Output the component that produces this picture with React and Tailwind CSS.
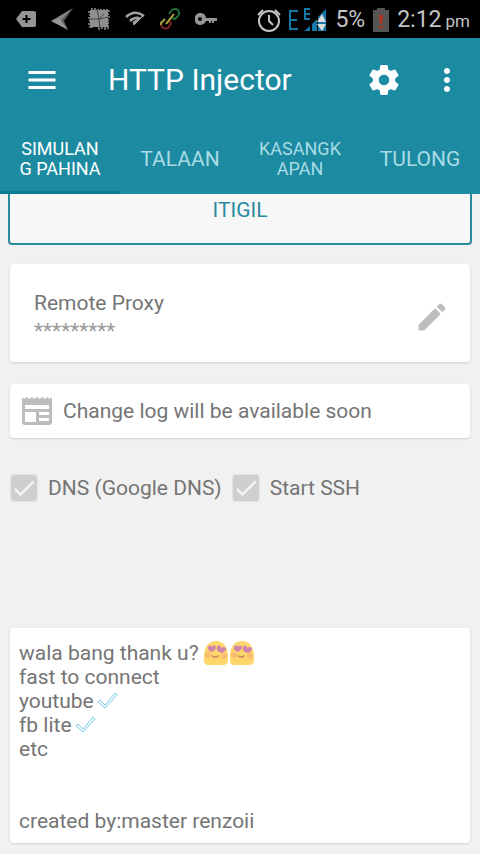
import React, { useState } from "react";
import { MdCheck, MdEdit, MdMenu, MdMoreVert } from "react-icons/md";

const tabs = [
  { id: "home", lines: ["SIMULAN", "G PAHINA"] },
  { id: "log", lines: ["TALAAN"] },
  { id: "tools", lines: ["KASANGK", "APAN"] },
  { id: "help", lines: ["TULONG"] },
];

const TagIcon = () => (
  <svg width="20" height="18" viewBox="0 0 20 18">
    <path d="M6 1h12a2 2 0 0 1 2 2v12a2 2 0 0 1-2 2H6L0 9z" fill="#959595" />
    <path d="M10.500 5v8M6.500 9h8" stroke="#000" strokeWidth="2" />
  </svg>
);

const ArrowIcon = () => (
  <svg width="22" height="22" viewBox="0 0 22 22">
    <path d="M22 0 0 13l9 1z" fill="#858585" />
    <path d="M22 0 9 14l8 8-4-9z" fill="#5c5c5c" />
    <path d="m0 13 9-2 8 11z" fill="#9a9a9a" />
  </svg>
);

const PatchIcon = () => (
  <svg width="22" height="22" viewBox="0 0 22 22">
    <path d="M2 2h18v17H2z" fill="#8f8f8f" />
    <path
      d="M4 0v4M7 0v4M10 1v3M13 1v3M16 1v3M19 1v3M0 4h4M1 7h3M0 10h4M18 3h4M18 6h3M18 9h4M1 13h4M0 16h4M1 19h4M11 18v4M14 18v3M17 18v4M20 17v4M19 12h2M19 15h2"
      stroke="#8f8f8f"
      strokeWidth="1.500"
    />
    <path d="m9 1 2 10 1 10M1 11l10 0 10-2M11 11l5-5" stroke="#444" fill="none" />
  </svg>
);

const WifiIcon = () => (
  <svg width="20" height="18" viewBox="0 0 20 18" fill="none">
    <path d="M1 7Q10-1 19 6" stroke="#a3a3a3" strokeWidth="2.500" />
    <path d="M5 11q4-4 9-3" stroke="#a3a3a3" strokeWidth="2.500" />
    <path d="M18 6 9 15l-1-3z" fill="#a3a3a3" stroke="#a3a3a3" />
  </svg>
);

const LinkIcon = () => (
  <svg width="20" height="22" viewBox="0 0 20 22" fill="none" strokeWidth="2">
    <path d="m9 6 3-4q3-2 6 0 2 3 0 6l-3 3-3-1" stroke="#226b38" />
    <path d="m5 11-4 4v2" stroke="#a5a13c" />
    <path d="M1 17q2 5 7 3l3-4-2-3" stroke="#7c2227" />
    <path d="m6 16 8-10" stroke="#b9a83c" />
  </svg>
);

const KeyIcon = () => (
  <svg width="22" height="12" viewBox="0 0 22 12">
    <path
      fillRule="evenodd"
      d="M6 0a6 6 0 1 0 5 8h3v2h2V8h1v2h2V8h3V5H11A6 6 0 0 0 6 0zM5 4a2 2 0 1 1 0 4 2 2 0 0 1 0-4z"
      fill="#959595"
    />
  </svg>
);

const AlarmIcon = () => (
  <svg width="24" height="24" viewBox="0 0 24 24" fill="none" stroke="#c4c4c4">
    <circle cx="12" cy="13" r="10" strokeWidth="2" />
    <path d="M12 7v6l4 4M1 7l5-5M23 7l-5-5" strokeWidth="2" />
  </svg>
);

const SignalIcon = () => (
  <svg width="38" height="24" viewBox="0 0 38 24">
    <path
      d="M9 3H1v18h8M1 12h7M21 1h-5v10h5M16 6h5"
      stroke="#1478a8"
      strokeWidth="2"
      fill="none"
    />
    <path d="M15 23l6-5v5zM23 23v-7l5-5v12zM29 23V9l8-8v22z" fill="#1478a8" />
    <path d="M28 14h9l-4-8zM28 16h9l-4 7z" fill="#dcdcdc" />
  </svg>
);

const BatteryIcon = () => (
  <svg width="16" height="24" viewBox="0 0 16 24">
    <path d="M4 0h8v2h4v22H0V2h4z" fill="#555" />
    <path d="M6 7h4l-1 9H7zM6 18h4v2H6z" fill="#b5341d" />
  </svg>
);

const GearIcon = () => (
  <svg width="36" height="36" viewBox="0 0 24 24" fill="currentColor">
    <path d="M19.43 12.980c.04-.32.07-.64.07-.98s-.03-.66-.07-.98l2.110-1.650c.19-.15.24-.42.12-.64l-2-3.460c-.12-.22-.39-.3-.61-.22l-2.490 1c-.52-.4-1.080-.73-1.690-.98l-.38-2.650C14.460 2.180 14.250 2 14 2h-4c-.25 0-.46.18-.49.42l-.38 2.650c-.61.25-1.170.59-1.690.98l-2.490-1c-.23-.09-.49 0-.61.22l-2 3.460c-.13.22-.07.49.12.64l2.110 1.650c-.04.32-.07.65-.07.98s.03.66.07.98l-2.110 1.650c-.19.15-.24.42-.12.64l2 3.460c.12.22.39.3.61.22l2.490-1c.52.4 1.080.73 1.690.98l.38 2.650c.03.24.24.42.49.42h4c.25 0 .46-.18.49-.42l.38-2.650c.61-.25 1.170-.59 1.690-.98l2.490 1c.23.09.49 0 .61-.22l2-3.460c.12-.22.07-.49-.12-.64l-2.110-1.650zM12 15.500c-1.930 0-3.500-1.570-3.500-3.500s1.570-3.500 3.500-3.500 3.500 1.570 3.500 3.500-1.570 3.500-3.500 3.500z" />
  </svg>
);

const NewsIcon = () => (
  <svg width="30" height="28" viewBox="0 0 30 28" fill="#bdbdbd">
    <path
      fillRule="evenodd"
      d="M0 0l2 2 3-2 2 2 3-2 2 2 3-2 3 2 2-2 3 2 2-2 3 2 2-2v25a3 3 0 0 1-3 3H3a3 3 0 0 1-3-3zM3 8v4h24V8zM3 15v10h11V15zM17 15v3h10v-3zM17 21v3h10v-3z"
    />
  </svg>
);

const HeartEyes = () => (
  <svg
    width="26"
    height="24"
    viewBox="0 0 26 24"
    className="inline-block align-top"
    role="img"
    aria-label="heart eyes"
  >
    <path
      d="M1 19C0 7 5 0 13 0s13 7 12 19c0 3-1 4-4 5H4c-2-1-3-2-3-5z"
      fill="#fdd76c"
    />
    <circle cx="5" cy="14" r="3" fill="#f9bd70" />
    <circle cx="21" cy="15" r="3" fill="#f9bd70" />
    <path d="M9 11C6 10 4 8 5 6c1-2 3-2 4 0 1-2 3-2 4 0 0 2-2 4-4 5z" fill="#cf84ac" />
    <path d="M19 12c-4-1-6-3-5-6 1-2 4-2 4 1 2-2 5-1 5 1 0 2-2 3-4 4z" fill="#cf84ac" />
    <path d="M8 14q4 2 8 0c0 4-7 4-8 0z" fill="#d28a65" />
  </svg>
);

const OutlinedCheck = () => (
  <svg
    width="24"
    height="24"
    viewBox="0 0 24 24"
    className="inline-block align-top"
    role="img"
    aria-label="check"
  >
    <path
      d="m2 13 2-2 5 5L19 4l2 2L9 19z"
      fill="#effaff"
      stroke="#83cbe8"
      strokeLinejoin="round"
    />
  </svg>
);

const StatusBar = () => (
  <div className="flex h-[38px] items-center justify-between bg-black pl-4 pr-[10px] text-[#c4c4c4]">
    <div className="flex items-center gap-[15px]">
      <TagIcon />
      <ArrowIcon />
      <PatchIcon />
      <WifiIcon />
      <LinkIcon />
      <KeyIcon />
    </div>
    <div className="flex items-center gap-2 pt-[2px] text-[23px] leading-6">
      <AlarmIcon />
      <SignalIcon />
      <span>5%</span>
      <BatteryIcon />
      <span className="flex items-baseline gap-1">
        2:12<span className="text-[17px] leading-none">pm</span>
      </span>
    </div>
  </div>
);

const CheckOption = ({ label }) => (
  <label className="flex items-center gap-[10px]">
    <span className="relative size-7">
      <input
        type="checkbox"
        defaultChecked
        disabled
        className="block size-7 appearance-none rounded border border-[#e4e4e4] bg-[#cfcfcf]"
      />
      <MdCheck className="pointer-events-none absolute inset-0 size-7 stroke-[#f4f4f4] text-[#f4f4f4]" />
    </span>
    {label}
  </label>
);

const App = () => {
  const [active, setActive] = useState("home");

  return (
    <div className="min-h-screen overflow-hidden bg-[#f1f1f1] font-['Roboto','Liberation_Sans',sans-serif] text-[21px] leading-6 text-[#757575]">
      <header className="relative z-10">
        <StatusBar />
        <div className="bg-[#1c8ba1] text-white">
          <div className="flex h-[84px] items-center pl-6 pr-[15px]">
            <button aria-label="Menu">
              <MdMenu size={36} />
            </button>
            <h1 className="ml-12 flex-1 text-[30px] leading-9">HTTP Injector</h1>
            <button aria-label="Settings">
              <GearIcon />
            </button>
            <button aria-label="More options" className="ml-[27px]">
              <MdMoreVert size={36} />
            </button>
          </div>
          <nav className="grid h-[72px] grid-cols-4">
            {tabs.map((tab) => (
              <button
                key={tab.id}
                onClick={() => setActive(tab.id)}
                className={`border-b-[3px] pt-1 ${
                  active === tab.id
                    ? "border-[#0a7a92] text-white"
                    : "border-transparent text-[#a9dbe5]"
                } ${tab.lines.length > 1 ? "text-[18px] leading-5" : "text-[21px] leading-6"}`}
              >
                {tab.lines.map((line) => (
                  <span key={line} className="block">
                    {line}
                  </span>
                ))}
              </button>
            ))}
          </nav>
        </div>
      </header>

      {/* page is scrolled a little, so the button slides under the tabs */}
      <main className="-mt-5 px-[10px] pb-[11px]">
        <div className="-mx-[2px]">
          <button className="h-[71px] w-full rounded border-2 border-[#2a8a9f] bg-[#f7f7f7] text-[#2a8a9f]">
            ITIGIL
          </button>
        </div>

        <section className="mt-[19px] flex h-[98px] items-center justify-between rounded bg-white pl-6 pr-5 pt-2 shadow">
          <div>
            <h2 className="leading-7">Remote Proxy</h2>
            <p className="leading-7 text-[#9a9a9a]">*********</p>
          </div>
          <button aria-label="Edit proxy" className="text-[#bdbdbd]">
            <MdEdit size={36} />
          </button>
        </section>

        <section className="mt-[22px] flex h-[54px] items-center gap-[11px] rounded bg-white pl-3 shadow">
          <NewsIcon />
          <p>Change log will be available soon</p>
        </section>

        <div className="mt-9 flex items-center gap-[10px]">
          <CheckOption label="DNS (Google DNS)" />
          <CheckOption label="Start SSH" />
        </div>

        <section className="mt-[126px] rounded bg-white px-[9px] pb-[10px] pt-[13px] shadow">
          <p className="flex">
            <span>wala bang thank u?</span>
            <span className="ml-1 flex">
              <HeartEyes />
              <HeartEyes />
            </span>
          </p>
          <p>fast to connect</p>
          <p className="flex gap-[2px]">
            youtube
            <OutlinedCheck />
          </p>
          <p className="flex gap-[2px]">
            fb lite
            <OutlinedCheck />
          </p>
          <p>etc</p>
          <p className="mt-12">created by:master renzoii</p>
        </section>
      </main>
    </div>
  );
};

export default App;
